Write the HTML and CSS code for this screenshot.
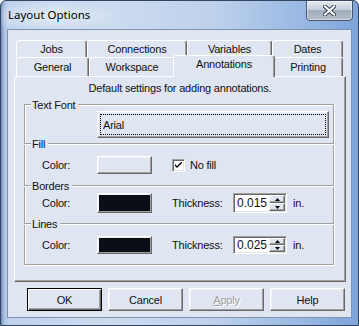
FILE: index.html
```html
<!DOCTYPE html>
<html>
<head>
<meta charset="utf-8">
<link rel="stylesheet" href="styles.css">
</head>
<body>
<div class="window">
  <div class="titlebar">
    <span class="title">Layout Options</span>
    <div class="close">
      <svg width="13" height="11" viewBox="0 0 13 11">
        <path d="M2 1.5 L11 9.5 M11 1.5 L2 9.5" stroke="#3b4656" stroke-width="4" stroke-linecap="square"/>
        <path d="M2 1.5 L11 9.5 M11 1.5 L2 9.5" stroke="#ffffff" stroke-width="2" stroke-linecap="square"/>
      </svg>
    </div>
  </div>
  <div class="client">
    <div class="tabs">
      <div class="tabrow back">
        <div class="tab t-jobs">Jobs</div>
        <div class="tab t-conn">Connections</div>
        <div class="tab t-vars">Variables</div>
        <div class="tab t-dates">Dates</div>
      </div>
      <div class="tabrow front">
        <div class="tab t-gen">General</div>
        <div class="tab t-work">Workspace</div>
        <div class="tab sel">Annotations</div>
        <div class="tab t-print">Printing</div>
      </div>
    </div>
    <div class="panel">
      <div class="desc">Default settings for adding annotations.</div>
      <div class="group">
        <div class="hdr hdr-top"><span class="dash"></span><span class="lbl">Text Font</span><span class="line"></span></div>
        <div class="gbody">
          <div class="btn fontbtn"><span class="focus">Arial</span></div>
          <div class="hdr"><span class="dash"></span><span class="lbl">Fill</span><span class="line"></span></div>
          <div class="row row-fill">
            <span class="clbl">Color:</span>
            <div class="btn swatch"></div>
            <span class="cb">
              <svg width="7" height="7" viewBox="0 0 7 7"><path d="M0 2 L0 4 L2 6 L7 1 L7 -1 L2 4 Z" fill="#000"/></svg>
            </span>
            <span class="cbl">No fill</span>
          </div>
          <div class="hdr"><span class="dash"></span><span class="lbl">Borders</span><span class="line"></span></div>
          <div class="row row-borders">
            <span class="clbl">Color:</span>
            <div class="btn swatch"><span class="chip"></span></div>
            <span class="tlbl">Thickness:</span>
            <div class="spin">
              <span class="val">0.015</span>
              <span class="arrows">
                <span class="arr"><svg width="5" height="3" viewBox="0 0 5 3"><path d="M2.5 0 L5 3 L0 3 Z" fill="#000"/></svg></span>
                <span class="arr"><svg width="5" height="3" viewBox="0 0 5 3"><path d="M0 0 L5 0 L2.5 3 Z" fill="#000"/></svg></span>
              </span>
            </div>
            <span class="unit">in.</span>
          </div>
          <div class="hdr hdr-lines"><span class="dash"></span><span class="lbl">Lines</span><span class="line"></span></div>
          <div class="row row-lines">
            <span class="clbl">Color:</span>
            <div class="btn swatch"><span class="chip"></span></div>
            <span class="tlbl">Thickness:</span>
            <div class="spin">
              <span class="val">0.025</span>
              <span class="arrows">
                <span class="arr"><svg width="5" height="3" viewBox="0 0 5 3"><path d="M2.5 0 L5 3 L0 3 Z" fill="#000"/></svg></span>
                <span class="arr"><svg width="5" height="3" viewBox="0 0 5 3"><path d="M0 0 L5 0 L2.5 3 Z" fill="#000"/></svg></span>
              </span>
            </div>
            <span class="unit">in.</span>
          </div>
        </div>
      </div>
    </div>
    <div class="buttons">
      <div class="btn pbtn default">OK</div>
      <div class="btn pbtn">Cancel</div>
      <div class="btn pbtn disabled"><span class="ul">A</span>pply</div>
      <div class="btn pbtn">Help</div>
    </div>
  </div>
</div>
</body>
</html>
```

FILE: styles.css
```css
* { box-sizing: border-box; }
html, body { margin: 0; padding: 0; }
body {
  width: 359px;
  height: 326px;
  overflow: hidden;
  font-family: "Liberation Sans", Arial, sans-serif;
  font-size: 11px;
  letter-spacing: -0.2px;
  color: #111;
  background: #fff;
}
.window {
  width: 359px;
  height: 326px;
  border: 1px solid #34465f;
  border-radius: 6px 6px 0 0;
  background:
    linear-gradient(to right, #6f8db9 0, #a9c0e0 3px, #bfd2ec 7px, #cddbef 30%, #bdd1ec 60%, #93b4e1 88%, #7ea4da 100%);
  display: flex;
  flex-direction: column;
  overflow: hidden;
}
.titlebar {
  height: 28px;
  flex-shrink: 0;
  display: flex;
  justify-content: space-between;
  align-items: flex-start;
  padding-left: 7px;
  background: radial-gradient(ellipse 70px 16px at 48px 15px, rgba(255,255,255,0.55), rgba(255,255,255,0) 100%);
}
.title {
  font-family: "Noto Sans", "Open Sans", sans-serif;
  font-size: 11.5px;
  letter-spacing: 0;
  line-height: 28px;
  color: #000;
}
.close {
  width: 47px;
  height: 21px;
  margin-top: -1px;
  margin-right: 5px;
  border: 1px solid #4a586c;
  border-radius: 0 0 4px 4px;
  background: linear-gradient(#e6eaf0 0, #c7cfd9 45%, #a3aebd 50%, #b3bdca 100%);
  box-shadow: inset 0 0 0 1px rgba(255,255,255,0.45);
  display: flex;
  align-items: center;
  justify-content: center;
}
.client {
  flex: 1;
  margin: 0 6px 7px 6px;
  border: 1px solid #7f93b0;
  background: #dfe6f1;
  display: flex;
  flex-direction: column;
}
.tabs {
  margin: 10px 0 0 8px;
}
.tabrow {
  display: flex;
}
.tab {
  border-left: 1px solid #fff;
  border-top: 1px solid #fff;
  border-right: 1px solid #696969;
  box-shadow: inset -1px 0 0 #a0a0a0;
  border-radius: 3px 3px 0 0;
  text-align: center;
  line-height: 14px;
  background: #dfe6f1;
  white-space: nowrap;
}
.back .tab { height: 17px; padding-top: 1px; }
.front .tab { height: 19px; padding-top: 2px; }
.t-jobs { width: 71px; }
.t-conn { width: 100px; }
.t-vars { width: 85px; }
.t-dates { width: 71px; }
.t-gen { width: 73px; }
.t-work { width: 86px; }
.t-print { width: 70px; }
.front .tab.sel {
  width: 102px;
  height: 22px;
  margin: -2px -2px -1px -2px;
  padding-top: 1px;
  position: relative;
  z-index: 2;
}
.panel {
  margin-left: 6px;
  width: 332px;
  height: 206px;
  border: 1px solid;
  border-color: #fff #696969 #696969 #fff;
  box-shadow: inset -1px -1px 0 #a0a0a0;
}
.desc {
  margin-top: 5px;
  line-height: 13px;
  text-align: center;
}
.group {
  margin: 4px 0 0 9px;
  width: 310px;
}
.hdr {
  display: flex;
  height: 12px;
  line-height: 12px;
  align-items: center;
}
.hdr .dash { width: 7px; }
.hdr .lbl { padding: 0 3px 0 1px; white-space: nowrap; }
.hdr .line { flex: 1; }
.hdr .dash, .hdr .line {
  height: 2px;
  border-top: 1px solid #a0a0a0;
  border-bottom: 1px solid #fff;
}
.hdr-top .dash {
  align-self: stretch;
  height: auto;
  margin-top: 5px;
  border-bottom: 0;
  border-left: 1px solid #a0a0a0;
  box-shadow: inset 1px 1px 0 #fff;
}
.hdr-top .line {
  align-self: stretch;
  height: auto;
  margin-top: 5px;
  border-bottom: 0;
  border-right: 1px solid #a0a0a0;
  box-shadow: inset 0 1px 0 #fff, 1px 0 0 #fff;
}
.gbody {
  border: 1px solid #a0a0a0;
  border-top: 0;
  box-shadow: inset 1px 0 0 #fff, 1px 1px 0 #fff;
  padding-bottom: 10px;
}
.gbody .hdr { margin-left: -1px; margin-right: -1px; }
.btn {
  border: 1px solid;
  border-color: #fff #696969 #696969 #fff;
  box-shadow: inset -1px -1px 0 #a0a0a0, inset 1px 1px 0 #eef1f6;
  background: #dfe6f1;
}
.fontbtn {
  margin: 0 4px 0 72px;
  height: 27px;
  padding: 2px;
  display: flex;
}
.fontbtn .focus {
  flex: 1;
  border: 1px dotted #000;
  display: flex;
  align-items: center;
  padding-left: 2px;
}
.row {
  display: flex;
  align-items: center;
  padding-left: 17px;
}
.row-fill { margin-top: 6px; height: 18px; }
.row-borders { margin-top: 1px; height: 20px; }
.gbody .hdr-lines { margin-top: 5px; }
.row-fill + .hdr { margin-top: 6px; }
.row-lines { margin-top: 6px; height: 18px; }
.clbl { width: 55px; }
.swatch {
  width: 55px;
  height: 100%;
  padding: 1px;
  display: flex;
}
.chip {
  flex: 1;
  background: #0b0e16;
}
.cb {
  margin-left: 20px;
  width: 13px;
  height: 13px;
  border: 1px solid;
  border-color: #a0a0a0 #fff #fff #a0a0a0;
  box-shadow: inset 1px 1px 0 #696969, inset -1px -1px 0 #e3e3e3;
  background: #fff;
  display: flex;
  align-items: center;
  justify-content: center;
}
.cbl { margin-left: 5px; }
.tlbl { margin-left: 20px; width: 61px; white-space: nowrap; }
.spin {
  width: 54px;
  height: 100%;
  border: 1px solid;
  border-color: #a0a0a0 #fff #fff #a0a0a0;
  box-shadow: inset 1px 1px 0 #696969, inset -1px -1px 0 #e3e3e3;
  background: #fff;
  padding: 1px;
  display: flex;
}
.val {
  flex: 1;
  display: flex;
  align-items: center;
  padding-left: 2px;
  font-size: 12px;
  letter-spacing: 0;
}
.arrows {
  width: 16px;
  display: flex;
  flex-direction: column;
}
.arr {
  flex: 1;
  border: 1px solid;
  border-color: #fff #696969 #696969 #fff;
  box-shadow: inset -1px -1px 0 #a0a0a0;
  background: #dfe6f1;
  display: flex;
  align-items: center;
  justify-content: center;
}
.unit { margin-left: 6px; }
.buttons {
  display: flex;
  gap: 6px;
  margin: 6px 0 0 19px;
}
.pbtn {
  width: 75px;
  height: 23px;
  display: flex;
  align-items: center;
  justify-content: center;
}
.pbtn.default {
  border: 1px solid #000;
  box-shadow: inset 1px 1px 0 #fff, inset -1px -1px 0 #696969, inset -2px -2px 0 #a0a0a0;
}
.pbtn.disabled {
  color: #a0a0a0;
  text-shadow: 1px 1px 0 #fff;
}
.ul { text-decoration: underline; }
```
